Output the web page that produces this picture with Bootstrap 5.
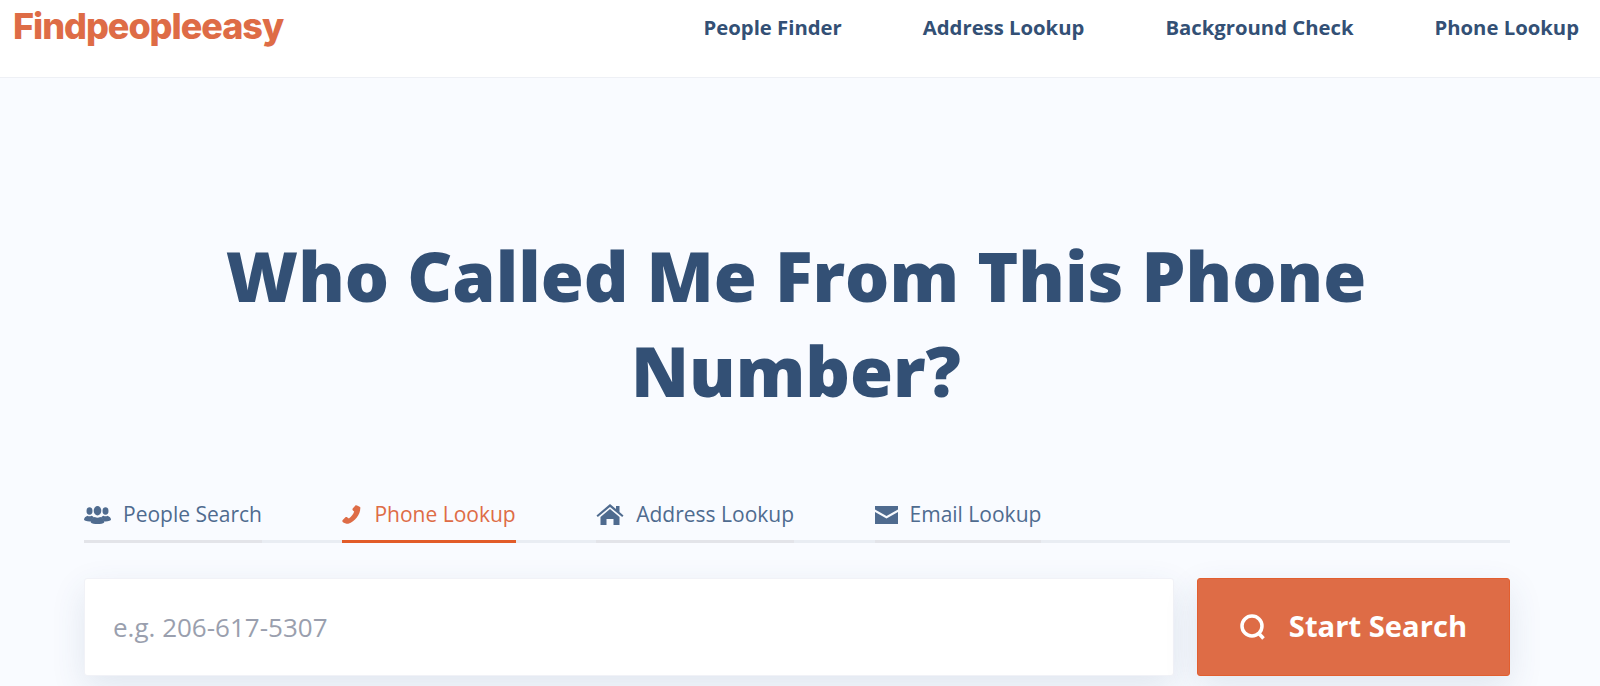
<!doctype html>
<html lang="en">
<head>
<meta charset="utf-8">
<title>Findpeopleeasy</title>
<link rel="stylesheet" href="https://cdn.jsdelivr.net/npm/bootstrap@5.3.0/dist/css/bootstrap.min.css">
<style>
html,body{height:686px;overflow:hidden}
body{background:#f9fbff;font-family:"Open Sans",sans-serif;color:#335075}
.topbar{height:78px;background:#fff;border-bottom:1px solid #eef0f5;padding:0 21px 0 13px}
.brand{font-family:Inter,sans-serif;font-weight:800;font-size:36px;line-height:1;color:#de6c46;letter-spacing:-1.05px;text-decoration:none;margin-top:8px}
.toplinks{gap:81px;margin-top:14px}
.toplinks a{font-size:20.3px;font-weight:700;color:#335075;text-decoration:none;line-height:26px}
.herotitle{font-size:69.6px;font-weight:800;line-height:95px;color:#335075;text-align:center;margin:0;padding:150px 208px 0 200px}
.panel{padding:76px 90px 0 84px}
.tabrow{border-bottom:3px solid #e9edf3;gap:80.5px;height:49px}
.tabitem{display:flex;align-items:center;gap:12px;height:49px;margin-bottom:-3px;border-bottom:3px solid #e3e4e9;font-size:21px;color:#4f6b8f;text-decoration:none;padding-bottom:5px}
.tabitem.on{color:#de6c46;border-bottom-color:#e25c29}
.tabitem svg{fill:currentColor;flex:none}
.searchrow{margin-top:35px;gap:23px}
.phonebox{flex:1;height:98px;border:1px solid #f1f2f7;border-radius:3px;background:#fff;font-size:26px;padding:0 28px;color:#335075;box-shadow:0 12px 34px rgba(52,82,122,.12)}
.phonebox::placeholder{color:#9a9fae;opacity:1}
.gobtn{width:313px;height:98px;background:#de6c46;border:1px solid #e25f2f;border-radius:3px;color:#fff;font-size:29.2px;font-weight:700;gap:23px;box-shadow:0 12px 34px rgba(52,82,122,.12)}
.gobtn:hover{background:#de6c46;color:#fff}
</style>
</head>
<body>
<header class="topbar d-flex justify-content-between align-items-start">
  <a class="brand" href="#">Findpeopleeasy</a>
  <nav class="toplinks d-flex">
    <a href="#">People Finder</a>
    <a href="#">Address Lookup</a>
    <a href="#">Background Check</a>
    <a href="#">Phone Lookup</a>
  </nav>
</header>
<main>
  <h1 class="herotitle">Who Called Me From This Phone Number?</h1>
  <section class="panel">
    <div class="tabrow d-flex">
      <a class="tabitem" href="#"><svg width="27" height="18" viewBox="0 0 27 18"><ellipse cx="5.500" cy="5" rx="3" ry="3.800"/><path d="M0 14c0-2.500 1.500-3.500 3.500-4.300 1.200.8 2.800.8 4 0 1 .4 2 1 2.500 2-1.500 1-2.500 2-2.600 3.800C5 15.500 1.500 15.500 0 14z"/><ellipse cx="21.500" cy="5" rx="3" ry="3.800"/><path d="M27 14c0-2.500-1.500-3.500-3.500-4.300-1.200.8-2.800.8-4 0-1 .4-2 1-2.500 2 1.500 1 2.500 2 2.600 3.800 2.400 0 5.900 0 7.400-1.500z"/><ellipse cx="13.500" cy="4.700" rx="3.800" ry="4.700"/><path d="M6.800 16.500c0-3.500 2-4.700 4-5.500 1.500 1 3.900 1 5.400 0 2 .8 4 2 4 5.500-2 2-11.400 2-13.400 0z"/></svg>People Search</a>
      <a class="tabitem on" href="#"><svg width="20" height="20" viewBox="0 0 20 20"><path d="M14.800.5c1 .2 2.700 1 3.500 1.800.4 6.700-5 14.200-12 16.500-1.300.3-4.300-.7-5.600-1.800-.5-.6-.5-1.500 0-2l2.500-2.500c.7-.6 1.500-.6 2.200 0l1.500 1c2.500-1.800 4.500-4.500 5.300-7l-1.300-1.100c-.6-.6-.6-1.300-.2-2l2.500-2.700c.4-.4.800-.4 1.600-.2z"/></svg>Phone Lookup</a>
      <a class="tabitem" href="#"><svg width="28" height="21" viewBox="0 0 27 21"><path d="M13.500 0l6 5V2h3.500v6l4 3.500-1.300 1.500L13.500 3 1.300 13 0 11.500z"/><path d="M13.500 5L23 13v8h-6v-6h-7v6H4v-8z"/></svg>Address Lookup</a>
      <a class="tabitem" href="#"><svg width="23" height="18" viewBox="0 0 23 18"><path d="M0 0h23v3.500L11.500 10 0 3.500z"/><path d="M0 6l11.500 6.500L23 6v12H0z"/></svg>Email Lookup</a>
    </div>
    <div class="searchrow d-flex">
      <input class="phonebox form-control" type="text" placeholder="e.g. 206-617-5307">
      <button class="gobtn btn d-flex align-items-center justify-content-center" type="button"><svg width="26" height="26" viewBox="0 0 26 26" fill="none" stroke="#fff" stroke-width="3.500"><circle cx="12" cy="12" r="10"/><path d="M18.500 19l5 5.500"/></svg>Start Search</button>
    </div>
  </section>
</main>
</body>
</html>
